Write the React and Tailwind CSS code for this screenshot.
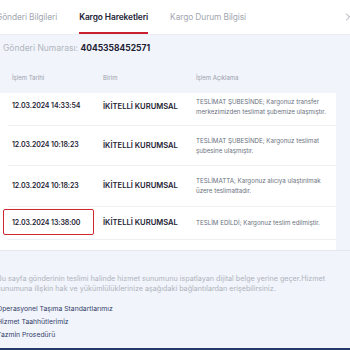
import { ChevronRight } from 'lucide-react';

const rows = [
  {
    date: '12.03.2024 14:33:54',
    unit: 'İKİTELLİ KURUMSAL',
    desc: 'TESLİMAT ŞUBESİNDE; Kargonuz transfer merkezimizden teslimat şubemize ulaşmıştır.',
    h: 'h-[33px] pb-[5px]',
  },
  {
    date: '12.03.2024 10:18:23',
    unit: 'İKİTELLİ KURUMSAL',
    desc: 'TESLİMAT ŞUBESİNDE; Kargonuz teslimat şubesine ulaşmıştır.',
    h: 'h-[40px]',
  },
  {
    date: '12.03.2024 10:18:23',
    unit: 'İKİTELLİ KURUMSAL',
    desc: 'TESLİMATTA; Kargonuz alıcıya ulaştırılmak üzere teslimattadır.',
    h: 'h-[41px]',
  },
  {
    date: '12.03.2024 13:38:00',
    unit: 'İKİTELLİ KURUMSAL',
    desc: 'TESLİM EDİLDİ; Kargonuz teslim edilmiştir.',
    h: 'h-[33px]',
    boxed: true,
  },
];

const links = ['Operasyonel Taşıma Standartlarımız', 'Hizmet Taahhütlerimiz', 'Tazmin Prosedürü'];

export default function App() {
  return (
    <div className="w-[350px] h-[350px] overflow-hidden bg-[#f1f4fa] relative font-['Inter','Noto_Sans',sans-serif]">
      {/* tabs */}
      <div className="h-[35px] bg-white border-b border-[#e9edf3] flex items-stretch">
        <div className="-ml-[4px] flex items-stretch gap-[22px] text-[8.4px] tracking-[-0.1px]">
          <div className="flex items-center text-[#a3a7b0]">Gönderi Bilgileri</div>
          <div className="relative flex items-center font-semibold text-[#1d2233]">
            Kargo Hareketleri
            <span className="absolute left-0 right-0 bottom-0 h-[2px] bg-[#c8202f]" />
          </div>
          <div className="flex items-center text-[#a3a7b0]">Kargo Durum Bilgisi</div>
        </div>
        <div className="ml-auto -mr-[4px] flex items-center">
          <ChevronRight size={12} strokeWidth={1.3} className="text-[#6b7280]" />
        </div>
      </div>

      {/* shipment number */}
      <div className="h-[27px] flex items-center pl-[3px] text-[8.5px]">
        <span className="text-[#b0b5bf]">Gönderi Numarası:&nbsp;</span>
        <span className="font-bold text-[#1d2233]">4045358452571</span>
      </div>

      {/* table */}
      <div className="w-[336px]">
        <div className="h-[31px] flex items-center text-[6px] text-[#9aa0ab]">
          <div className="w-[103px] pl-[12px]">İşlem Tarihi</div>
          <div className="w-[93px]">Birim</div>
          <div>İşlem Açıklama</div>
        </div>
        <div className="bg-white pb-[10px]">
          {rows.map((r, i) => (
            <div key={i} className={`${r.h} flex items-center border-b border-[#eef0f4] ml-[8px] -mr-[1px]`}>
              <div className="w-[95px] relative text-[7px] tracking-[-0.1px] font-semibold text-[#1d2233] pl-[4px]">
                {r.boxed && (
                  <span className="absolute -left-[5px] -top-[9px] w-[91px] h-[26px] border-[1.5px] border-[#d3272f] rounded-[2px]" />
                )}
                {r.date}
              </div>
              <div className="w-[93px] text-[7.6px] font-semibold text-[#1d2233]">{r.unit}</div>
              <div className="w-[138px] text-[6.2px] leading-[10px] text-[#6b7180]">{r.desc}</div>
            </div>
          ))}
        </div>
      </div>
      <div className="border-t border-[#e4e8ee]" />

      {/* footer text */}
      <div className="-ml-[3px] pt-[23px] pr-[14px] text-[7.2px] leading-[9.5px] text-[#aeb3bd]">
        Bu sayfa gönderinin teslimi halinde hizmet sunumunu ispatlayan dijital belge yerine geçer.Hizmet sunumuna ilişkin hak ve yükümlülüklerinize aşağıdaki bağlantılardan erişebilirsiniz.
      </div>
      <div className="-ml-[3px] mt-[11px] flex flex-col gap-[4px] text-[6.8px] leading-[9px] text-[#34416b]">
        {links.map((l) => (
          <div key={l}>{l}</div>
        ))}
      </div>
      <div className="absolute left-0 right-0 bottom-0 h-[2px] bg-[#243a6b]" />
    </div>
  );
}
